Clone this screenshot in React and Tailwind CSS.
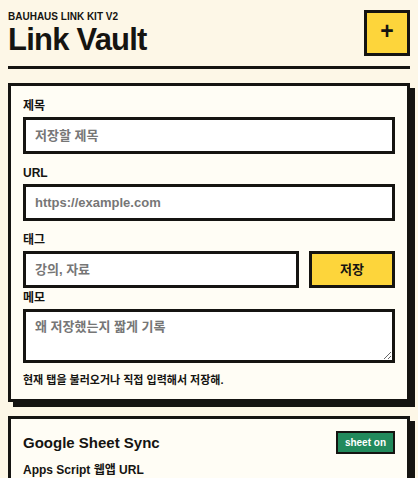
import React from "react";

const font = "font-['Liberation_Sans','Noto_Sans_CJK_KR',sans-serif]";

function Label({ children, className = "" }) {
  return (
    <div className={`text-[12px] leading-[16px] font-bold mb-[3px] ${className}`}>
      {children}
    </div>
  );
}

const inputCls =
  "block w-full h-[37px] border-[3px] border-[#151411] bg-white px-[9px] text-[13px] font-bold text-[#151411] placeholder:text-[#767676] outline-none";

export default function App() {
  return (
    <div className={`h-screen overflow-hidden bg-[#fdf7e7] px-2 text-[#151411] ${font}`}>
      <header className="flex items-start justify-between pt-[10px] pb-[10px] border-b-[3px] border-[#151411]">
        <div>
          <div className="text-[10px] leading-[14px] font-bold uppercase">BAUHAUS LINK KIT V2</div>
          <h1 className="text-[31px] leading-[31px] font-bold tracking-tight">Link Vault</h1>
        </div>
        <button className="flex h-[46px] w-[46px] items-center justify-center border-[3px] border-[#151411] bg-[#fdd53b] pb-[3px] text-[23px] font-bold leading-none text-[#151411]">
          +
        </button>
      </header>

      <main className="flex flex-col gap-[14px] pt-[14px]">
        <section className="border-[3px] border-[#151411] bg-[#fffdf5] px-[12px] pt-[12px] pb-[11px] shadow-[5px_5px_0_#151411]">
          <Label>제목</Label>
          <input className={inputCls} placeholder="저장할 제목" />

          <Label className="mt-[11px]">URL</Label>
          <input className={inputCls} placeholder="https://example.com" />

          <Label className="mt-[11px]">태그</Label>
          <div className="flex gap-[10px]">
            <input className={`${inputCls} flex-1 min-w-0`} placeholder="강의, 자료" />
            <button className="h-[37px] w-[86px] shrink-0 border-[3px] border-[#151411] bg-[#fdd53b] text-[13px] font-bold text-[#151411]">
              저장
            </button>
          </div>

          <Label className="mt-[2px]">메모</Label>
          <textarea
            className="block h-[54px] w-full resize-y border-[3px] border-[#151411] bg-white px-[9px] pt-[6px] text-[13px] font-bold leading-[18px] text-[#151411] placeholder:text-[#767676] outline-none"
            placeholder="왜 저장했는지 짧게 기록"
          />

          <p className="mt-[9px] text-[11px] leading-[16px] font-bold">현재 탭을 불러오거나 직접 입력해서 저장해.</p>
        </section>

        <section className="border-[3px] border-[#151411] bg-[#fffdf5] px-[12px] pt-[12px] pb-[12px] shadow-[5px_5px_0_#151411]">
          <div className="flex items-center justify-between">
            <h2 className="text-[15px] leading-[20px] font-bold">Google Sheet Sync</h2>
            <span className="border-2 border-[#151411] bg-[#228a5c] px-[7px] text-[10px] leading-[19px] font-bold text-white">
              sheet on
            </span>
          </div>
          <Label className="mt-[8px]">Apps Script 웹앱 URL</Label>
          <input className={inputCls} placeholder="https://script.google.com/macros/s/..." />
        </section>
      </main>
    </div>
  );
}
